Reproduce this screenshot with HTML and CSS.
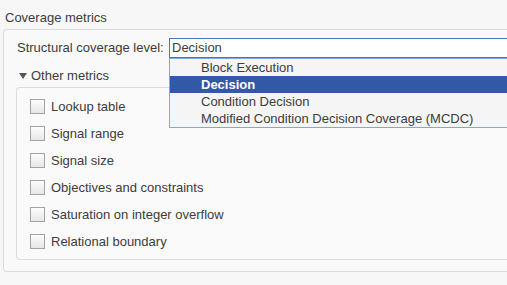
FILE: index.html
```html
<!DOCTYPE html>
<html lang="en">
<head>
    <meta charset="UTF-8">
    <title>Coverage metrics</title>
    <link rel="stylesheet" href="styles.css">
</head>
<body>

    <div class="title">Coverage metrics</div>
    <div class="panel">
        <div class="level-row">
            <label class="level-label">Structural coverage level:</label>
            <div class="combo">
                <div class="combo-input">Decision</div>
                <!-- open dropdown list -->
                <ul class="combo-list">
                    <li>Block Execution</li>
                    <li class="selected">Decision</li>
                    <li>Condition Decision</li>
                    <li>Modified Condition Decision Coverage (MCDC)</li>
                </ul>
            </div>
        </div>

        <div class="disclosure"><span class="arrow"></span>Other metrics</div>

        <div class="metrics">
            <div class="check-row"><span class="box"></span>Lookup table</div>
            <div class="check-row"><span class="box"></span>Signal range</div>
            <div class="check-row"><span class="box"></span>Signal size</div>
            <div class="check-row"><span class="box"></span>Objectives and constraints</div>
            <div class="check-row"><span class="box"></span>Saturation on integer overflow</div>
            <div class="check-row"><span class="box"></span>Relational boundary</div>
        </div>
    </div>

</body>
</html>
```

FILE: styles.css
```css
html, body {
    margin: 0;
    padding: 0;
    overflow: hidden;
}
body {
    font-family: "Liberation Sans", Arial, sans-serif;
    font-size: 13px;
    line-height: 16px;
    color: #3c3c3c;
    background-color: #f7f7f7;
    width: 507px;
    height: 285px;
}
.title {
    padding: 10px 0 0 5px;
}
.panel {
    margin: 3px 0 0 3px;
    border: 1px solid #dcdcdc;
    border-right: none;
    border-radius: 4px 0 0 4px;
    background-color: #f9f9f9;
    padding: 8px 0 11px 12px;
}
.level-row {
    display: flex;
    align-items: center;
    height: 20px;
    padding-left: 1px;
}
.level-label {
    width: 152px;
}
.combo {
    position: relative;
    flex: 1;
}
.combo-input {
    height: 18px;
    line-height: 18px;
    border: 1px solid #4a74bb;
    border-right: none;
    background-color: #fff;
    padding-left: 2px;
}
.combo-list {
    position: absolute;
    top: 100%;
    left: 0;
    right: 0;
    margin: 0;
    padding: 0;
    list-style: none;
    background-color: #f5f5f5;
    border: 1px solid #82a8d6;
    border-right: none;
    z-index: 5;
}
.combo-list li {
    height: 17px;
    line-height: 17px;
    padding-left: 31px;
}
.combo-list li.selected {
    background-color: #3458a8;
    color: #fff;
    font-weight: bold;
}
.disclosure {
    margin-top: 10px;
    padding-left: 3px;
    display: flex;
    align-items: center;
}
.arrow {
    width: 0;
    height: 0;
    border-left: 4px solid transparent;
    border-right: 4px solid transparent;
    border-top: 6px solid #555;
    margin-right: 4px;
}
.metrics {
    margin-top: 3px;
    border: 1px solid #dcdcdc;
    border-right: none;
    border-radius: 4px 0 0 4px;
    background-color: #fafafa;
    padding: 5px 0 4px 13px;
}
.check-row {
    height: 27px;
    display: flex;
    align-items: center;
}
.box {
    width: 13px;
    height: 13px;
    border: 1px solid #a3a3a3;
    background: linear-gradient(#fdfdfd, #e6e6e6);
    margin-right: 6px;
}
```
